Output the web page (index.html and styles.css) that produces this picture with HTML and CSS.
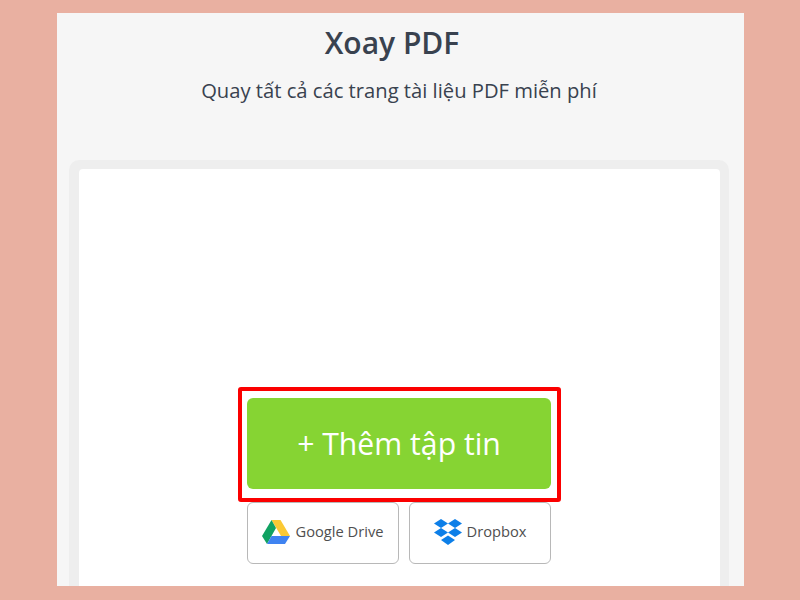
FILE: index.html
```html
<!DOCTYPE html>
<html>
<head>
	<title>Xoay PDF</title>
	<link rel="stylesheet" href="styles.css">
</head>
<body>
	<div class="panel">
		<h1 class="title">Xoay PDF</h1>
		<p class="subtitle">Quay tất cả các trang tài liệu PDF miễn phí</p>
		<div class="dropzone">
			<div class="dropzone-inner">
				<div class="actions">
					<button class="add-btn">+ Thêm tập tin<span class="highlight"></span></button>
					<div class="sources">
						<button class="source-btn">
							<svg class="source-icon" viewBox="0 0 28 24" width="28" height="24">
								<polygon points="9.5,0 18.5,0 28,16 19,16" fill="#fbc934" />
								<polygon points="9.5,0 14,8 5,24 0,16" fill="#10a262" />
								<polygon points="9.5,16 28,16 23,24 5,24" fill="#3f83f1" />
							</svg>
							Google Drive
						</button>
						<button class="source-btn">
							<svg class="source-icon" viewBox="0 0 28 26" width="28" height="26">
								<polygon points="7,0 14,4.5 7,9 0,4.5" fill="#0d7fe8" />
								<polygon points="21,0 28,4.5 21,9 14,4.5" fill="#0d7fe8" />
								<polygon points="7,9 14,13.5 7,18 0,13.5" fill="#0d7fe8" />
								<polygon points="21,9 28,13.5 21,18 14,13.5" fill="#0d7fe8" />
								<polygon points="14,16.5 21,21 14,26 7,21" fill="#0d7fe8" />
							</svg>
							Dropbox
						</button>
					</div>
				</div>
			</div>
		</div>
	</div>
</body>
</html>
```

FILE: styles.css
```css
html,
body {
	height: 100%;
}

body {
	margin: 0;
	padding: 13px 56px 14px 57px;
	box-sizing: border-box;
	background: #e9b0a1;
	font-family: "Open Sans", sans-serif;
	overflow: hidden;
}

.panel {
	display: flex;
	flex-direction: column;
	height: 100%;
	padding: 0 15px 0 12px;
	box-sizing: border-box;
	background: #f6f6f6;
	text-align: center;
}

.title {
	margin: 10px 0 0;
	padding-right: 14px;
	font-size: 30px;
	line-height: 40px;
	font-weight: 600;
	color: #39424f;
}

.subtitle {
	margin: 11px 0 0;
	font-size: 20.2px;
	line-height: 32px;
	color: #39424f;
}

.dropzone {
	flex: 1;
	margin-top: 54px;
	padding: 9px 9px 0 10px;
	background: #eeeeee;
	border-radius: 10px 10px 0 0;
}

.dropzone-inner {
	height: 100%;
	padding: 229px 0 0 168px;
	box-sizing: border-box;
	background: #ffffff;
	border-radius: 4px 4px 0 0;
}

.actions {
	display: flex;
	flex-direction: column;
	width: 304px;
	gap: 13px;
}

.add-btn {
	position: relative;
	height: 91px;
	padding: 0;
	border: 0;
	border-radius: 6px;
	background: #86d433;
	font-family: inherit;
	font-size: 30.2px;
	color: #ffffff;
}

.highlight {
	position: absolute;
	top: -11px;
	left: -9px;
	right: -10px;
	bottom: -13px;
	border: 4px solid #fb0000;
	border-radius: 3px;
}

.sources {
	display: flex;
	gap: 10px;
}

.source-btn {
	display: flex;
	align-items: center;
	justify-content: center;
	gap: 5px;
	height: 62px;
	padding: 0 0 4px;
	background: #ffffff;
	border: 1px solid #b8b8b8;
	border-radius: 6px;
	font-family: inherit;
	font-size: 14.7px;
	color: #4f4f4f;
}

.source-btn:first-child {
	width: 152px;
}

.source-btn:last-child {
	width: 142px;
}

.source-icon {
	margin-top: 2px;
}
```
